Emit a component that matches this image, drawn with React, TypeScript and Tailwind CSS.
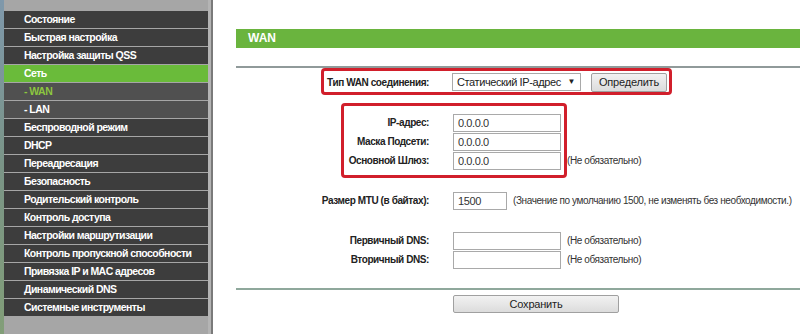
import React from "react";

const menu: { t: string; kind?: "active" | "sub" | "subActive" }[] = [
  { t: "Состояние" },
  { t: "Быстрая настройка" },
  { t: "Настройка защиты QSS" },
  { t: "Сеть", kind: "active" },
  { t: "- WAN", kind: "subActive" },
  { t: "- LAN", kind: "sub" },
  { t: "Беспроводной режим" },
  { t: "DHCP" },
  { t: "Переадресация" },
  { t: "Безопасность" },
  { t: "Родительский контроль" },
  { t: "Контроль доступа" },
  { t: "Настройки маршрутизации" },
  { t: "Контроль пропускной способности" },
  { t: "Привязка IP и MAC адресов" },
  { t: "Динамический DNS" },
  { t: "Системные инструменты" },
];

function Label({ children }: { children: React.ReactNode }) {
  return (
    <div className="w-[193px] text-right text-[10px] tracking-[-0.4px] font-bold text-[#222] whitespace-nowrap">
      {children}
    </div>
  );
}

function Input({ value, w = "w-[108px]" }: { value?: string; w?: string }) {
  return (
    <div
      className={`${w} h-[18px] border border-[#a9a9a9] bg-white text-[11px] tracking-[-0.4px] leading-[16px] pl-[4px] text-[#333]`}
    >
      {value}
    </div>
  );
}

function Hint({ children }: { children: React.ReactNode }) {
  return (
    <div className="text-[10px] tracking-[-0.4px] text-[#333] ml-[6px] whitespace-nowrap">{children}</div>
  );
}

export default function App() {
  return (
    <div
      className="w-[800px] h-[334px] flex bg-white overflow-hidden"
      style={{ fontFamily: '"Liberation Sans", Arial, sans-serif' }}
    >
      {/* Sidebar */}
      <div className="flex h-full shrink-0">
        <div className="w-[4px] h-full bg-gradient-to-b from-[#7f98ab] via-[#7a9486] to-[#829e78]" />
        <div className="w-[204px] h-full bg-[#a6a6a6] pt-[10px] flex flex-col">
          {menu.map((m) => {
            const bg =
              m.kind === "active"
                ? "bg-[#6abb3a]"
                : m.kind === "sub" || m.kind === "subActive"
                ? "bg-[#505050]"
                : "bg-[#3d3d3d]";
            const color = m.kind === "subActive" ? "text-[#8cc63f]" : "text-white";
            return (
              <div
                key={m.t}
                className={`${bg} ${color} mt-[1px] h-[17px] leading-[17px] pl-[20px] text-[10.5px] tracking-[-0.55px] font-bold whitespace-nowrap`}
              >
                {m.t}
              </div>
            );
          })}
        </div>
        <div className="w-[3px] h-full bg-[#b4b4b4]" />
        <div className="w-[2px] h-full bg-[#7a7a7a]" />
      </div>

      {/* Main */}
      <div className="relative flex-1 h-full pl-[23px] pt-[29px]">
        <div className="h-[19px] bg-[#6ab43e] text-white font-bold text-[12px] leading-[19px] pl-[12px]">WAN</div>
        <div className="mt-[18px] h-[2px] bg-[#909a9a]" />

        <div className="flex flex-col">
          <div className="mt-[4px] h-[20px] flex items-center">
            <Label>Тип WAN соединения:</Label>
            <div className="ml-[23px] w-[129px] h-[18px] border border-[#a9a9a9] bg-white flex items-center justify-between pl-[4px] pr-[5px] text-[11px] tracking-[-0.4px] text-[#222] whitespace-nowrap">
              <span>Статический IP-адрес</span>
              <span className="text-[8px]">▼</span>
            </div>
            <div className="ml-[10px] w-[76px] h-[19px] border border-[#a0a0a0] rounded-[2px] bg-gradient-to-b from-[#f2f2f2] to-[#dcdcdc] text-[11px] tracking-[-0.2px] text-[#222] flex items-center justify-center">
              Определить
            </div>
          </div>

          <div className="mt-[21px] h-[19px] flex items-center">
            <Label>IP-адрес:</Label>
            <div className="ml-[24px]">
              <Input value="0.0.0.0" />
            </div>
          </div>
          <div className="h-[19px] flex items-center">
            <Label>Маска Подсети:</Label>
            <div className="ml-[24px]">
              <Input value="0.0.0.0" />
            </div>
          </div>
          <div className="h-[19px] flex items-center">
            <Label>Основной Шлюз:</Label>
            <div className="ml-[24px]">
              <Input value="0.0.0.0" />
            </div>
            <Hint>(Не обязательно)</Hint>
          </div>

          <div className="mt-[21px] h-[19px] flex items-center">
            <Label>Размер MTU (в байтах):</Label>
            <div className="ml-[24px]">
              <Input value="1500" w="w-[54px]" />
            </div>
            <Hint>(Значение по умолчанию 1500, не изменять без необходимости.)</Hint>
          </div>

          <div className="mt-[21px] h-[19px] flex items-center">
            <Label>Первичный DNS:</Label>
            <div className="ml-[24px]">
              <Input />
            </div>
            <Hint>(Не обязательно)</Hint>
          </div>
          <div className="h-[19px] flex items-center">
            <Label>Вторичный DNS:</Label>
            <div className="ml-[24px]">
              <Input />
            </div>
            <Hint>(Не обязательно)</Hint>
          </div>
        </div>

        <div className="mt-[19px] h-[2px] bg-[#8fa89c]" />
        <div className="mt-[5px] flex">
          <div className="ml-[217px] w-[166px] h-[18px] border border-[#a0a0a0] rounded-[2px] bg-gradient-to-b from-[#f2f2f2] to-[#dcdcdc] text-[11px] tracking-[-0.2px] text-[#222] flex items-center justify-center">
            Сохранить
          </div>
        </div>

        {/* annotation overlays */}
        <div className="absolute left-[108px] top-[68px] w-[351px] h-[27px] border-[3px] border-[#d11f2b] rounded-[4px] pointer-events-none" />
        <div className="absolute left-[128px] top-[103px] w-[226px] h-[75px] border-[3px] border-[#d11f2b] rounded-[4px] pointer-events-none" />
      </div>
    </div>
  );
}
